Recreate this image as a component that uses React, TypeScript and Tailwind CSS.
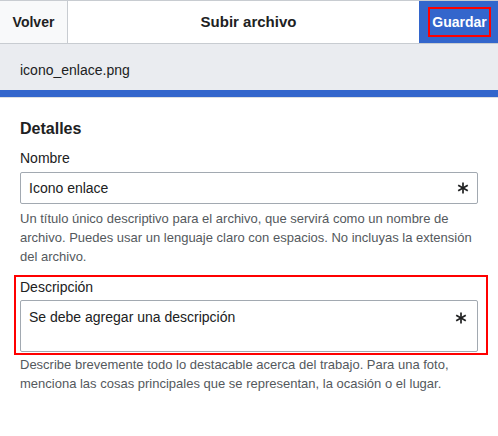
import React from "react";

function Asterisk({ className }: { className?: string }) {
  return (
    <svg width="12" height="12" viewBox="0 0 12 12" className={className}>
      <g stroke="#202122" strokeWidth="1.7" strokeLinecap="butt">
        <line x1="6" y1="0.5" x2="6" y2="11.5" />
        <line x1="1.2" y1="3.2" x2="10.8" y2="8.8" />
        <line x1="1.2" y1="8.8" x2="10.8" y2="3.2" />
      </g>
    </svg>
  );
}

export default function App() {
  return (
    <div
      className="w-[498px] h-[436px] bg-white overflow-hidden text-[#202122]"
      style={{ fontFamily: '"Liberation Sans", Arial, sans-serif' }}
    >
      {/* header */}
      <div className="flex h-[44px] border-t border-b border-[#c8ccd1]">
        <div className="w-[68px] bg-[#f8f9fa] border-r border-[#c8ccd1] flex items-center justify-center text-[14px] font-bold">
          Volver
        </div>
        <div className="flex-1 flex items-center justify-center text-[15px] font-bold pl-[10px]">
          Subir archivo
        </div>
        <div className="relative w-[79px] bg-[#3366cc] flex items-center justify-center text-white text-[14px] font-bold">
          <span className="pl-[2px]">Guardar</span>
          <div className="absolute left-[9px] top-[6px] w-[63px] h-[30px] border-2 border-[#ff0000]" />
        </div>
      </div>

      {/* filename bar */}
      <div className="h-[46px] bg-[#eaecf0] flex items-center px-[20px] pt-[6px] text-[14px]">
        icono_enlace.png
      </div>
      <div className="h-[7px] bg-[#3366cc]" />
      <div className="h-[1px] bg-[#dcdfe3]" />

      {/* content */}
      <div className="px-[20px] pt-[21px]">
        <div className="text-[16px] leading-[20px] font-bold">Detalles</div>
        <div className="mt-[9px] text-[14px] leading-[20px]">Nombre</div>
        <div className="mt-[4px] h-[32px] border border-[#a2a9b1] rounded-[2px] flex items-center justify-between pl-[8px] pr-[8px] text-[14px]">
          <span>Icono enlace</span>
          <Asterisk />
        </div>
        <p className="mt-[5px] text-[13px] leading-[19px] text-[#54595d]">
          Un título único descriptivo para el archivo, que servirá como un nombre de archivo. Puedes usar un lenguaje claro con espacios. No incluyas la extensión del archivo.
        </p>

        <div className="relative mt-[11px]">
          <div className="text-[14px] leading-[20px]">Descripción</div>
          <div className="mt-[3px] h-[52px] border border-[#a2a9b1] rounded-[2px] flex justify-between pl-[8px] pr-[10px] pt-[6px] text-[14px]">
            <span className="leading-[20px]">Se debe agregar una descripción</span>
            <Asterisk className="mt-[5px]" />
          </div>
          <div className="absolute left-[-6px] top-[-2px] w-[474px] h-[80px] border-2 border-[#ff0000]" />
        </div>
        <p className="mt-[3px] text-[13px] leading-[19px] text-[#54595d]">
          Describe brevemente todo lo destacable acerca del trabajo. Para una foto, menciona las cosas principales que se representan, la ocasión o el lugar.
        </p>
      </div>
    </div>
  );
}
